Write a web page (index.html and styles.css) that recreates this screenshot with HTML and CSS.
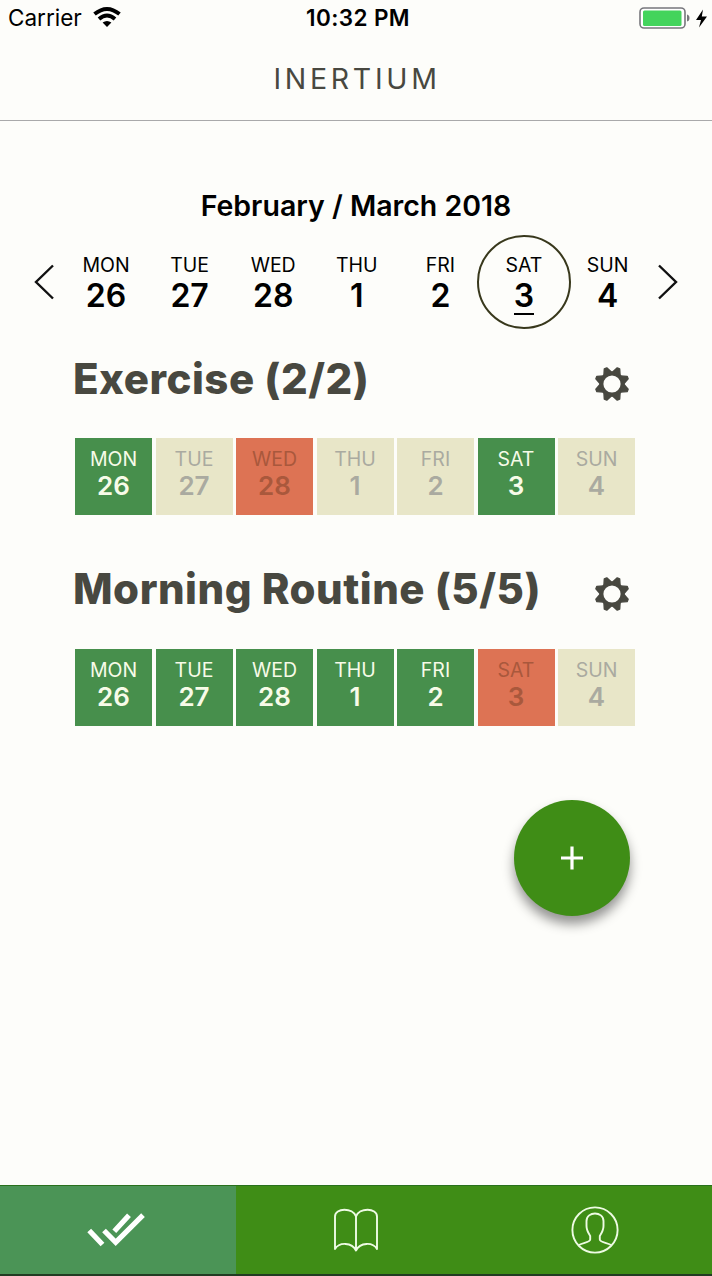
FILE: index.html
```html
<!DOCTYPE html>
<html lang="en">
<head>
<meta charset="utf-8">
<title>Inertium</title>
<link rel="stylesheet" href="styles.css">
</head>
<body>
<svg class="defs" width="0" height="0" aria-hidden="true">
  <defs>
    <path id="tooth" d="M-4.2-11-1.3-16.9H1.3L4.2-11Z"/>
    <symbol id="gear" viewBox="-18 -18 36 36">
      <circle r="10.6" fill="none" stroke="currentColor" stroke-width="4"/>
      <g fill="currentColor" stroke="currentColor" stroke-width="1.4" stroke-linejoin="round">
        <use href="#tooth" transform="rotate(22.5)"/><use href="#tooth" transform="rotate(67.5)"/>
        <use href="#tooth" transform="rotate(112.5)"/><use href="#tooth" transform="rotate(157.5)"/>
        <use href="#tooth" transform="rotate(202.5)"/><use href="#tooth" transform="rotate(247.5)"/>
        <use href="#tooth" transform="rotate(292.5)"/><use href="#tooth" transform="rotate(337.5)"/>
      </g>
    </symbol>
  </defs>
</svg>
<div class="app">
  <div class="status">
    <div class="status-left">
      <span class="carrier">Carrier</span>
      <svg width="28" height="21" viewBox="0 0 28 21">
        <g fill="none" stroke="#000" stroke-width="3.9">
          <path d="M1.5 7.1Q14-3.3 26.5 7.1"/>
          <path d="M6 12Q14 5 22 12"/>
        </g>
        <path d="M9.6 15.6Q14 12.2 18.4 15.6L14 20Z"/>
      </svg>
    </div>
    <div class="time">10:32 PM</div>
    <div class="status-right">
      <svg width="68" height="24" viewBox="0 0 68 24">
        <rect x="1" y="1" width="45" height="20" rx="4" fill="#fff" stroke="#77777c" stroke-width="1.6"/>
        <rect x="4" y="3.5" width="38.5" height="15.5" rx="1.5" fill="#43d45c"/>
        <path d="M48 7.5Q50.5 8 50.5 11T48 14.5Z" fill="#77777c"/>
        <path d="M64 2.5 57 13H62L60 20.5 68 9.5H62.8Z"/>
      </svg>
    </div>
  </div>
  <header class="header"><h1 class="brand">INERTIUM</h1></header>
  <main class="main">
    <h2 class="month">February / March 2018</h2>
    <div class="week">
      <svg class="arrow" width="20" height="36" viewBox="0 0 20 36"><path d="M19 1.5 2 18 19 34.5"/></svg>
      <div class="days">
        <div class="day"><span>MON</span><b>26</b></div>
        <div class="day"><span>TUE</span><b>27</b></div>
        <div class="day"><span>WED</span><b>28</b></div>
        <div class="day"><span>THU</span><b>1</b></div>
        <div class="day"><span>FRI</span><b>2</b></div>
        <div class="day today"><span>SAT</span><b>3</b></div>
        <div class="day"><span>SUN</span><b>4</b></div>
      </div>
      <svg class="arrow" width="20" height="36" viewBox="0 0 20 36"><path d="M1 1.5 18 18 1 34.5"/></svg>
    </div>
    <section class="habit">
      <div class="habit-head"><h2 class="title">Exercise (2/2)</h2><svg class="gear" width="36" height="36"><use href="#gear"/></svg></div>
      <div class="tiles">
        <div class="tile done"><span>MON</span><b>26</b></div>
        <div class="tile"><span>TUE</span><b>27</b></div>
        <div class="tile missed"><span>WED</span><b>28</b></div>
        <div class="tile"><span>THU</span><b>1</b></div>
        <div class="tile"><span>FRI</span><b>2</b></div>
        <div class="tile done"><span>SAT</span><b>3</b></div>
        <div class="tile"><span>SUN</span><b>4</b></div>
      </div>
    </section>
    <section class="habit">
      <div class="habit-head"><h2 class="title">Morning Routine (5/5)</h2><svg class="gear" width="36" height="36"><use href="#gear"/></svg></div>
      <div class="tiles">
        <div class="tile done"><span>MON</span><b>26</b></div>
        <div class="tile done"><span>TUE</span><b>27</b></div>
        <div class="tile done"><span>WED</span><b>28</b></div>
        <div class="tile done"><span>THU</span><b>1</b></div>
        <div class="tile done"><span>FRI</span><b>2</b></div>
        <div class="tile missed"><span>SAT</span><b>3</b></div>
        <div class="tile"><span>SUN</span><b>4</b></div>
      </div>
    </section>
    <div class="fab">
      <svg width="22" height="24" viewBox="0 0 22 24"><path d="M0 12H22M11 .5V23.5" stroke="#fff" stroke-width="3.2"/></svg>
    </div>
  </main>
  <nav class="nav">
    <div class="tab active">
      <svg width="58" height="34" viewBox="0 0 58 34" fill="none" stroke="#fff" stroke-width="5.2">
        <path d="M2.2 17.5 15.5 31.5M17 17.5 28.7 29.4 56 2.2M27.3 18.3 42 2.2"/>
      </svg>
    </div>
    <div class="tab">
      <svg width="46" height="46" viewBox="0 0 46 46" fill="none" stroke="#eefbe4" stroke-width="1.9" stroke-linejoin="round">
        <path d="M23 9.5C20 .5 2 .5 2 9.5V42C6 35 19 35 23 43.5 27 35 40 35 44 42V9.5C44 .5 26 .5 23 9.5V43.5"/>
      </svg>
    </div>
    <div class="tab profile">
      <svg width="48" height="48" viewBox="0 0 48 48" fill="none" stroke="#eefbe4" stroke-width="1.9">
        <circle cx="24" cy="24" r="22.6"/>
        <path d="M8 39C12 36.5 19 36.5 19.2 33.5V30C18 28 15.5 24.5 15.5 20V15C15.5 5 32.5 5 32.5 15V20C32.5 24.5 30 28 28.8 30V33.5C29 36.5 36 36.5 40 39"/>
      </svg>
    </div>
  </nav>
</div>
</body>
</html>
```
FILE: styles.css
```css
*, *::after { box-sizing: border-box; }
body {
  margin: 0;
  background: #fdfdfa;
  font-family: Inter, "Liberation Sans", sans-serif;
  color: #000;
}
h1, h2 { margin: 0; }
svg { display: block; overflow: visible; }
.defs { position: absolute; }
.app {
  width: 712px;
  height: 1276px;
  display: flex;
  flex-direction: column;
}
.status {
  height: 36px;
  display: grid;
  grid-template-columns: 1fr auto 1fr;
  align-items: center;
  padding: 0 6px 0 8px;
  font-size: 22.5px;
  line-height: 36px;
}
.status-left { display: flex; align-items: center; gap: 11px; }
.status-left svg { margin-top: -2px; }
.time { font-weight: 600; letter-spacing: 0.4px; padding-left: 2px; }
.status-right { display: flex; justify-content: flex-end; padding-top: 2px; }
.status-right svg { margin-right: -1px; }
.header {
  height: 85px;
  border-bottom: 1px solid #a9a9aa;
}
.brand {
  font-size: 28.5px;
  font-weight: 400;
  line-height: 86px;
  text-align: center;
  letter-spacing: 3.7px;
  color: #484840;
  padding-left: 2px;
}
.main { flex: 1; padding-top: 65px; }
.month {
  font-size: 28.5px;
  font-weight: 600;
  line-height: 40px;
  text-align: center;
}
.week {
  display: flex;
  align-items: center;
  justify-content: space-between;
  padding: 0 34px;
  height: 94px;
  margin-top: 9px;
}
.arrow { fill: none; stroke: #111; stroke-width: 2.4; }
.days { display: grid; grid-template-columns: repeat(7, 83.6px); padding-left: 1.6px; }
.day {
  position: relative;
  display: flex;
  flex-direction: column;
  align-items: center;
}
.day span { font-size: 19.5px; line-height: 28px; }
.day b { font-size: 32px; font-weight: 600; line-height: 34px; }
.today b { border-bottom: 2px solid #000; margin-bottom: -2px; }
.today::after {
  content: "";
  position: absolute;
  left: 50%;
  top: 50%;
  width: 94px;
  height: 94px;
  margin: -47px 0 0 -47px;
  border: 2px solid #38381c;
  border-radius: 50%;
}
.habit { padding: 0 77px 0 74px; margin-bottom: 44px; }
.week + .habit { padding-top: 20px; }
.habit-head {
  display: flex;
  justify-content: space-between;
  align-items: center;
  height: 60px;
  padding-right: 5px;
}
.title {
  margin-left: -1px;
  font-size: 42px;
  font-weight: 800;
  line-height: 60px;
  letter-spacing: 0.5px;
  color: #484840;
}
.gear { color: #484840; margin-top: 10px; }
.tiles {
  display: grid;
  grid-template-columns: repeat(7, 77px);
  justify-content: space-between;
  margin: 29px 0 0 1px;
}
.habit + .habit .tiles { margin-top: 30px; }
.tile {
  height: 77px;
  display: flex;
  flex-direction: column;
  align-items: center;
  padding-top: 8px;
  background: #e8e6c8;
  color: #aaaaa0;
}
.tile span { font-size: 19.5px; line-height: 26px; }
.tile b { font-size: 26px; font-weight: 600; line-height: 28px; }
.done { background: #478f4c; color: #f7fbe8; }
.missed { background: #dd7354; color: #a9583c; }
.fab {
  width: 116px;
  height: 116px;
  margin: 74px 0 0 514px;
  border-radius: 50%;
  background: #3f8d16;
  box-shadow: 0 8px 12px rgba(0, 0, 0, 0.42);
  display: flex;
  align-items: center;
  justify-content: center;
}
.nav {
  height: 91px;
  display: grid;
  grid-template-columns: 236px 240px 236px;
  border-top: 1px solid #28701c;
  border-bottom: 2px solid #213c22;
  background: #3f8d16;
}
.tab { display: flex; align-items: center; justify-content: center; padding-right: 1px; }
.active { background: #4b9456; padding-right: 4px; }
.profile { padding: 0 0 0 2px; }
```
